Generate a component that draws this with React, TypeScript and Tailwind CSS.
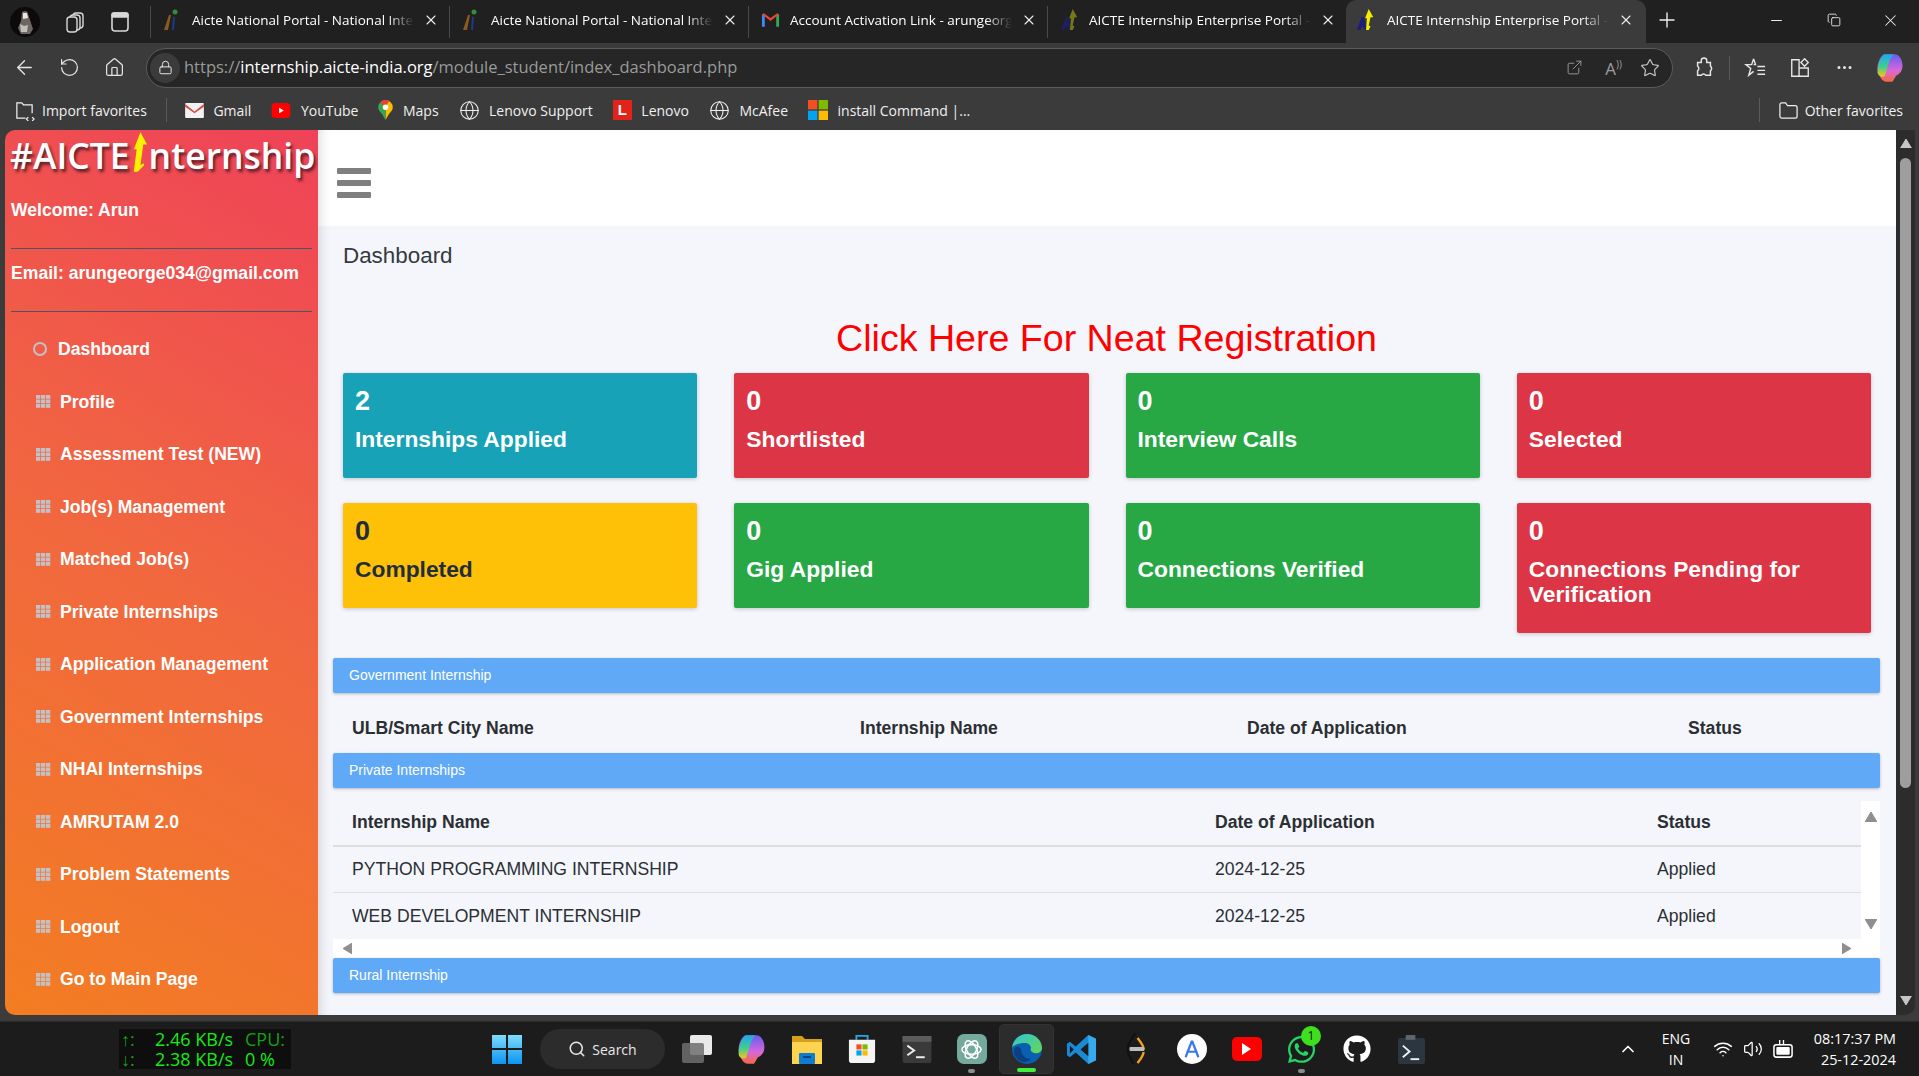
import { ArrowLeft, ChevronUp, Copy, ExternalLink, Globe, Home, Lock, Minus, MoreHorizontal, Plus, RotateCw, Search, Star, Volume2, Wifi, X } from 'lucide-react'
import { FaGithub, FaWhatsapp } from 'react-icons/fa'

// ── Data ─────────────────────────────────────────────────────────────────────
const tabs = [
  { title: 'Aicte National Portal - National Internship', icon: 'aicte' },
  { title: 'Aicte National Portal - National Internship', icon: 'aicte' },
  { title: 'Account Activation Link - arungeorge034', icon: 'gmail' },
  { title: 'AICTE Internship Enterprise Portal - Student', icon: 'ai' },
]

const menu = [
  'Profile',
  'Assessment Test (NEW)',
  'Job(s) Management',
  'Matched Job(s)',
  'Private Internships',
  'Application Management',
  'Government Internships',
  'NHAI Internships',
  'AMRUTAM 2.0',
  'Problem Statements',
  'Logout',
  'Go to Main Page',
]

const cards = [
  { n: '2', label: 'Internships Applied', cls: 'bg-[#17a2b8] text-white' },
  { n: '0', label: 'Shortlisted', cls: 'bg-[#dc3545] text-white' },
  { n: '0', label: 'Interview Calls', cls: 'bg-[#28a745] text-white' },
  { n: '0', label: 'Selected', cls: 'bg-[#dc3545] text-white' },
  { n: '0', label: 'Completed', cls: 'bg-[#ffc107] text-[#1f2d3d]' },
  { n: '0', label: 'Gig Applied', cls: 'bg-[#28a745] text-white' },
  { n: '0', label: 'Connections Verified', cls: 'bg-[#28a745] text-white' },
  { n: '0', label: 'Connections Pending for Verification', cls: 'bg-[#dc3545] text-white' },
]

const applied = [
  { name: 'PYTHON PROGRAMMING INTERNSHIP', date: '2024-12-25', status: 'Applied' },
  { name: 'WEB DEVELOPMENT INTERNSHIP', date: '2024-12-25', status: 'Applied' },
]

// ── Small drawings ───────────────────────────────────────────────────────────
function TabIcon({ kind, dim }: { kind: string; dim?: boolean }) {
  if (kind === 'gmail') {
    return (
      <svg viewBox="0 0 20 16" className="w-[19px] h-[16px] shrink-0">
        <path d="M1 15V2l3 1v12z" fill="#4285f4" />
        <path d="M16 15V3l3-1v13z" fill="#34a853" />
        <path d="M1 2l9 7 9-7-2-1-7 5-7-5z" fill="#ea4335" />
      </svg>
    )
  }
  if (kind === 'aicte') {
    return (
      <svg viewBox="0 0 16 22" className="w-[16px] h-[22px] shrink-0">
        <path d="M1 21L6 6h2L5 21z" fill="#8a5a1f" />
        <path d="M9 21L10 8h2l-1 13z" fill="#1d3a8a" />
        <circle cx="12" cy="3" r="2.5" fill="#2f8f3a" />
      </svg>
    )
  }
  return (
    <svg viewBox="0 0 22 24" className="w-[20px] h-[22px] shrink-0">
      <path d="M1 23L6 9h3l3 14H9.5L9 20H6l-1 3z" fill={dim ? '#1f1f5f' : '#1d1d7a'} />
      <path d="M14 0l5 9h-3l-2 9 2 1-2 4h-3l1-13h-2z" fill={dim ? '#77761a' : '#f5ee00'} />
    </svg>
  )
}

function Avatar() {
  return (
    <svg viewBox="0 0 30 30" className="w-[30px] h-[30px] shrink-0">
      <circle cx="15" cy="15" r="15" fill="#0c0a0a" />
      <path d="M12 5c3-2 6-1 6 2l2 6 3 9-3 5h-9l-3-6 3-7z" fill="#6d6763" />
      <path d="M13 6h4l1 5-5 1z" fill="#ece8e0" />
      <path d="M10 17l4 2 4-1-1 7h-6z" fill="#c4beb8" />
    </svg>
  )
}

function Copilot({ size }: { size: number }) {
  return (
    <svg viewBox="0 0 24 24" width={size} height={size} className="shrink-0">
      <defs>
        <linearGradient id={`cp-a-${size}`} x1="0" y1="0" x2="0" y2="1">
          <stop offset="0" stopColor="#1fa7ee" />
          <stop offset="0.55" stopColor="#3ecf8e" />
          <stop offset="1" stopColor="#f5c518" />
        </linearGradient>
        <linearGradient id={`cp-b-${size}`} x1="0" y1="0" x2="0" y2="1">
          <stop offset="0" stopColor="#6a5cf0" />
          <stop offset="0.6" stopColor="#d868d8" />
          <stop offset="1" stopColor="#f56a3c" />
        </linearGradient>
      </defs>
      <path d="M8 1h8c3 0 6 4 6 9 0 4-2 7-5 8l-3 5H9c-3 0-6-4-6-9-1 0-1-1-1-2 0-5 3-11 6-11z" fill={`url(#cp-b-${size})`} />
      <path d="M8 1h7l-3 4-4 13c-1 2-6 1-6-3 0-5 3-14 6-14z" fill={`url(#cp-a-${size})`} />
    </svg>
  )
}

function TileSquares() {
  return (
    <svg viewBox="0 0 16 16" className="w-[20px] h-[20px] shrink-0">
      <rect x="0" y="0" width="7.5" height="7.5" fill="#f25022" />
      <rect x="8.5" y="0" width="7.5" height="7.5" fill="#7fba00" />
      <rect x="0" y="8.5" width="7.5" height="7.5" fill="#00a4ef" />
      <rect x="8.5" y="8.5" width="7.5" height="7.5" fill="#ffb900" />
    </svg>
  )
}

function GridIcon() {
  return (
    <svg viewBox="0 0 15 13" className="w-[15px] h-[13px] shrink-0" fill="#c3c1c6">
      {[0, 5, 10].map(x =>
        [0, 4.5, 9].map(y => <rect key={`${x}-${y}`} x={x} y={y} width="4.3" height="3.8" />)
      )}
    </svg>
  )
}

function Arrow({ dir, cls }: { dir: 'up' | 'down' | 'left' | 'right'; cls: string }) {
  const points = { up: '0,10 6,0 12,10', down: '0,0 12,0 6,10', left: '10,0 10,12 0,6', right: '0,0 10,6 0,12' }[dir]
  const box = dir === 'up' || dir === 'down' ? '0 0 12 10' : '0 0 10 12'
  return (
    <svg viewBox={box} className={cls}>
      <polygon points={points} fill="currentColor" stroke="currentColor" strokeLinejoin="round" />
    </svg>
  )
}

const chromeFont = "font-['Open_Sans','Noto_Sans',sans-serif]"

// ── Browser chrome ───────────────────────────────────────────────────────────
function TabBar() {
  return (
    <div className={`h-[43px] bg-[#202020] flex items-end text-white ${chromeFont}`}>
      <div className="w-[150px] h-full flex items-center shrink-0 pl-[10px]">
        <Avatar />
        <svg viewBox="0 0 20 22" className="w-[20px] h-[22px] ml-[25px] text-[#d8d8d8]" fill="none" stroke="currentColor" strokeWidth="1.4">
          <rect x="8" y="2" width="10" height="15" rx="3" />
          <rect x="5" y="4" width="10" height="15" rx="3" fill="#202020" />
          <rect x="2" y="6" width="10" height="15" rx="3" fill="#202020" />
        </svg>
        <svg viewBox="0 0 20 22" className="w-[20px] h-[22px] ml-[25px] text-[#d8d8d8]" fill="none" stroke="currentColor" strokeWidth="1.6">
          <rect x="2" y="2" width="16" height="18" rx="3" />
          <rect x="2" y="2" width="16" height="4" rx="1.5" fill="currentColor" />
        </svg>
      </div>
      {tabs.map((t, i) => (
        <div key={i} className="w-[299px] h-full flex items-center shrink-0 pb-[3px]">
          <div className="w-px h-[32px] bg-[#4a4a4a] mt-[3px]" />
          <div className="w-[29px] ml-[12px] flex"><TabIcon kind={t.icon} dim={t.icon === 'ai'} /></div>
          <span className="w-[222px] text-[13.5px] whitespace-nowrap overflow-hidden [mask-image:linear-gradient(90deg,#000_88%,transparent)]">{t.title}</span>
          <X size={16} strokeWidth={1.6} className="ml-[9px] text-[#eee]" />
        </div>
      ))}
      <div className="w-[300px] h-[43px] pb-[3px] mt-auto flex items-center shrink-0 bg-[#3b3b3b] rounded-t-[10px] pl-[10px]">
        <div className="w-[31px] flex"><TabIcon kind="ai" /></div>
        <span className="w-[222px] text-[13.5px] whitespace-nowrap overflow-hidden [mask-image:linear-gradient(90deg,#000_88%,transparent)]">AICTE Internship Enterprise Portal - Student</span>
        <X size={16} strokeWidth={1.6} className="ml-[9px] text-[#eee]" />
      </div>
      <div className="h-full flex items-center flex-1 pb-[3px]">
        <Plus size={24} strokeWidth={1.4} className="ml-[9px] text-[#eee]" />
        <Minus size={17} strokeWidth={1.4} className="ml-[89px] text-[#eee]" />
        <Copy size={14} strokeWidth={1.5} className="ml-[42px] text-[#eee]" />
        <X size={19} strokeWidth={1.3} className="ml-[40px] text-[#eee]" />
      </div>
    </div>
  )
}

function Toolbar() {
  return (
    <div className={`h-[47px] pt-[2px] bg-[#3b3b3b] flex items-center text-[#e6e6e6] ${chromeFont}`}>
      <ArrowLeft size={23} strokeWidth={1.4} className="ml-[13px]" />
      <RotateCw size={21} strokeWidth={1.4} className="ml-[23px] -scale-x-100" />
      <Home size={21} strokeWidth={1.4} className="ml-[24px]" />
      <div className="ml-[21px] w-[1527px] h-[40px] rounded-full bg-[#262626] border border-[#5b5b5b] flex items-center shrink-0">
        <div className="w-[30px] h-[30px] ml-[3px] rounded-full bg-[#3b3b3b] flex items-center justify-center">
          <Lock size={15} strokeWidth={1.6} />
        </div>
        <span className="ml-[4px] text-[16.5px] text-[#9a9a9a] whitespace-nowrap">
          https://<span className="text-white">internship.aicte-india.org</span>/module_student/index_dashboard.php
        </span>
        <div className="ml-auto flex items-center text-[#9d9d9d]">
          <ExternalLink size={17} strokeWidth={1.3} />
          <span className="ml-[22px] text-[17px] leading-none">A<span className="text-[10px] align-super">))</span></span>
          <Star size={20} strokeWidth={1.4} className="ml-[18px] mr-[12px] text-[#c8c8c8]" />
        </div>
      </div>
      <svg viewBox="0 0 24 24" className="w-[22px] h-[22px] ml-[20px] shrink-0" fill="none" stroke="currentColor" strokeWidth="1.6">
        <path d="M9 4a3 3 0 0 1 6 0v2h4v4a3 3 0 0 1 0 5v5h-5a3 3 0 0 0-5 0H5v-5a3 3 0 0 0 0-5V6h4z" />
      </svg>
      <div className="w-px h-[24px] bg-[#5b5b5b] ml-[14px] shrink-0" />
      <svg viewBox="0 0 24 24" className="w-[23px] h-[23px] ml-[14px] shrink-0" fill="none" stroke="currentColor" strokeWidth="1.5">
        <path d="M10 3l2 6h-2M10 3L8 9H2l5 4-2 7 5-4" />
        <path d="M14 11h8M14 15h8M14 19h8" />
      </svg>
      <svg viewBox="0 0 24 24" className="w-[22px] h-[22px] ml-[22px] shrink-0" fill="none" stroke="currentColor" strokeWidth="1.5">
        <path d="M3 3h8v18H3zM11 12h10v9H11zM17 2l4 4-4 4-4-4z" />
      </svg>
      <MoreHorizontal size={19} strokeWidth={1.8} className="ml-[24px] shrink-0" />
      <div className="ml-[21px]"><Copilot size={30} /></div>
    </div>
  )
}

function Favorites() {
  const items: { label: string; icon: React.ReactNode }[] = [
    { label: 'Gmail', icon: <svg viewBox="0 0 20 16" className="w-[19px] h-[15px]"><rect width="20" height="16" rx="1" fill="#f2f2f2" /><path d="M0 1l10 8 10-8v3l-10 7L0 4z" fill="#d54c3f" /></svg> },
    { label: 'YouTube', icon: <svg viewBox="0 0 20 16" className="w-[20px] h-[15px]"><rect width="20" height="16" rx="4" fill="#f00" /><path d="M8 5l5 3-5 3z" fill="#fff" /></svg> },
    { label: 'Maps', icon: <svg viewBox="0 0 16 22" className="w-[15px] h-[20px]"><path d="M8 0a8 8 0 0 1 8 8c0 3-2 5-4 7l-4 7z" fill="#fbbc04" /><path d="M8 0a8 8 0 0 0-8 8c0 3 2 5 4 7l4 7z" fill="#34a853" /><path d="M2 3a8 8 0 0 1 10-2L8 8z" fill="#ea4335" /><circle cx="8" cy="8" r="3" fill="#fff" /></svg> },
    { label: 'Lenovo Support', icon: <Globe size={21} strokeWidth={1.2} /> },
    { label: 'Lenovo', icon: <span className="w-[19px] h-[20px] bg-[#e2231a] text-white flex items-center justify-center text-[15px] font-bold font-['Liberation_Sans']">L</span> },
    { label: 'McAfee', icon: <Globe size={21} strokeWidth={1.2} /> },
    { label: 'install Command |...', icon: <TileSquares /> },
  ]
  return (
    <div className={`h-[40px] bg-[#3b3b3b] flex items-center text-[#f0f0f0] text-[14px] ${chromeFont}`}>
      <svg viewBox="0 0 22 22" className="w-[21px] h-[21px] ml-[14px]" fill="none" stroke="currentColor" strokeWidth="1.3">
        <path d="M12 19H3V3h5l2 2h9v9M15 18l-2 2 2 2M19 18l2 2-2 2" />
      </svg>
      <span className="ml-[7px]">Import favorites</span>
      <div className="w-px h-[24px] bg-[#5b5b5b] ml-[19px]" />
      <div className="flex items-center gap-[20px] ml-[18px]">
        {items.map(f => (
          <div key={f.label} className="flex items-center gap-[9.5px] whitespace-nowrap">
            {f.icon}
            <span>{f.label}</span>
          </div>
        ))}
      </div>
      <div className="ml-auto flex items-center mr-[16px]">
        <div className="w-px h-[24px] bg-[#5b5b5b] mr-[18px]" />
        <svg viewBox="0 0 22 22" className="w-[21px] h-[21px]" fill="none" stroke="currentColor" strokeWidth="1.3">
          <path d="M2 5a2 2 0 0 1 2-2h4l2 3h8a2 2 0 0 1 2 2v9a2 2 0 0 1-2 2H4a2 2 0 0 1-2-2z" />
        </svg>
        <span className="ml-[6px]">Other favorites</span>
      </div>
    </div>
  )
}

// ── Page parts ───────────────────────────────────────────────────────────────
function Sidebar() {
  return (
    <aside className="w-[313px] ml-[5px] shrink-0 rounded-tl-[10px] rounded-bl-[10px] overflow-hidden bg-[linear-gradient(30deg,#f37d22_0%,#f1673f_50%,#ef4259_100%)] text-white font-['Liberation_Sans',sans-serif] font-bold text-[17.6px]">
      <div className="h-[52px] mb-[4px] pl-[5px] relative flex items-center text-[35.5px] font-semibold whitespace-nowrap font-['Open_Sans',sans-serif] [text-shadow:2px_3px_3px_rgba(60,20,30,0.8)]">
        <span>#AICTE</span>
        <svg viewBox="0 0 18 42" className="w-[17px] h-[40px] -mt-[8px] mx-[1px] shrink-0">
          <path d="M10 0l7 13h-4l-3 22 3-2 1 2-7 7H3l3-24H3z" fill="#f7f300" />
        </svg>
        <span>nternship</span>
      </div>
      <div className="h-[62px] pl-[6px] pt-[14px] leading-[20px]">Welcome: Arun</div>
      <div className="h-px mx-[6px] bg-[#4b5563]" />
      <div className="h-[62px] pl-[6px] pt-[14px] leading-[20px]">Email: arungeorge034@gmail.com</div>
      <div className="h-px mx-[6px] bg-[#4b5563]" />
      <nav className="pt-[11px]">
        <div className="h-[52.5px] flex items-center">
          <span className="ml-[28px] w-[14px] h-[14px] rounded-full border-2 border-[#c3c1c6]" />
          <span className="ml-[11px]">Dashboard</span>
        </div>
        {menu.map(m => (
          <div key={m} className="h-[52.5px] flex items-center">
            <div className="ml-[31px]"><GridIcon /></div>
            <span className="ml-[9px] whitespace-nowrap">{m}</span>
          </div>
        ))}
      </nav>
    </aside>
  )
}

function InfoBar({ title }: { title: string }) {
  return (
    <div className="h-[35px] pl-[16px] flex items-center rounded-[2px] bg-[#5fa9f7] text-white text-[14px] shadow-[0_1px_3px_rgba(0,0,0,0.25)]">
      {title}
    </div>
  )
}

function Dashboard() {
  return (
    <main className="flex-1 min-w-0 bg-[#f4f6fb] shadow-[inset_12px_0_12px_-10px_rgba(0,0,0,0.15)] font-['Liberation_Sans',sans-serif] text-[#2b2f33] text-[17.6px] overflow-hidden">
      <div className="h-[96px] bg-white flex items-center pl-[19px] shadow-[inset_12px_0_12px_-10px_rgba(0,0,0,0.15)]">
        <div className="w-[34px] flex flex-col gap-[6.5px] mt-[10px]">
          <span className="h-[5.5px] bg-[#7f7f7f] rounded-[1px]" />
          <span className="h-[5.5px] bg-[#7f7f7f] rounded-[1px]" />
          <span className="h-[5.5px] bg-[#7f7f7f] rounded-[1px]" />
        </div>
      </div>
      <h1 className="pl-[25px] pt-[16px] text-[22.4px] leading-[28px] text-[#343a40]">Dashboard</h1>
      <div className="mt-[44px] mb-[11px] h-[48px] pr-[1px] flex items-center justify-center text-[37.6px] text-[#f00]">
        Click Here For Neat Registration
      </div>
      <div className="px-[25px] grid grid-cols-4 gap-x-[37px] gap-y-[25px] items-start">
        {cards.map(c => (
          <div key={c.label} className={`${c.cls} rounded-[2px] px-[12px] pt-[12px] pb-[26px] shadow-[0_1px_4px_rgba(0,0,0,0.2)]`}>
            <div className="text-[27px] leading-[32px] font-bold">{c.n}</div>
            <div className="mt-[10px] text-[22.8px] leading-[25px] font-bold">{c.label}</div>
          </div>
        ))}
      </div>
      <div className="pl-[15px] pr-[16px] mt-[25px]">
        <InfoBar title="Government Internship" />
        <div className="h-[60px] pl-[19px] pt-[25px] leading-[20px] font-bold grid grid-cols-[508px_387px_441px_1fr]">
          <span>ULB/Smart City Name</span>
          <span>Internship Name</span>
          <span>Date of Application</span>
          <span>Status</span>
        </div>
        <InfoBar title="Private Internships" />
        <div className="mt-[13px] h-[157px] flex flex-col bg-white">
          <div className="flex h-[138px]">
            <div className="flex-1 bg-[#f4f6fb]">
              <div className="h-[46px] pl-[19px] pt-[11px] leading-[20px] font-bold grid grid-cols-[863px_442px_1fr] border-b-2 border-[#dedede]">
                <span>Internship Name</span>
                <span>Date of Application</span>
                <span>Status</span>
              </div>
              {applied.map((r, i) => (
                <div key={r.name} className={`h-[46px] pl-[19px] flex items-center ${i === 0 ? 'border-b border-[#dedede]' : ''}`}>
                  <div className="w-full grid grid-cols-[863px_442px_1fr]">
                    <span>{r.name}</span>
                    <span>{r.date}</span>
                    <span>{r.status}</span>
                  </div>
                </div>
              ))}
            </div>
            <div className="w-[19px] flex flex-col items-center justify-between pt-[11px] pb-[10px] text-[#8f8f8f]">
              <Arrow dir="up" cls="w-[12px] h-[10px]" />
              <Arrow dir="down" cls="w-[12px] h-[10px]" />
            </div>
          </div>
          <div className="h-[19px] flex items-center justify-between pl-[10px] pr-[29px] text-[#8f8f8f]">
            <Arrow dir="left" cls="w-[9px] h-[11px]" />
            <Arrow dir="right" cls="w-[9px] h-[11px]" />
          </div>
        </div>
        <InfoBar title="Rural Internship" />
      </div>
    </main>
  )
}

function PageScrollbar() {
  return (
    <div className="w-[19px] shrink-0 bg-[#2c2c2c] rounded-br-[10px] flex flex-col items-center text-[#c6c6c6]">
      <Arrow dir="up" cls="w-[12px] h-[9px] mt-[9px]" />
      <div className="w-[11px] h-[630px] mt-[10px] rounded-full bg-[#9e9e9e]" />
      <Arrow dir="down" cls="w-[12px] h-[9px] mt-auto mb-[10px]" />
    </div>
  )
}

// ── Taskbar ──────────────────────────────────────────────────────────────────
function AppSlot({ children, dot, active }: { children: React.ReactNode; dot?: boolean; active?: boolean }) {
  return (
    <div className={`relative w-[55px] h-[50px] flex items-center justify-center rounded-[5px] ${active ? 'bg-[#2c2c2c] border border-[#333]' : ''}`}>
      {children}
      {dot && <span className="absolute bottom-[1px] w-[7px] h-[4px] rounded-full bg-[#8b8b8b]" />}
      {active && <span className="absolute bottom-[1px] w-[19px] h-[4px] rounded-full bg-[#3ff03f]" />}
    </div>
  )
}

function Taskbar() {
  return (
    <div className={`h-[55px] bg-[#1c1c1c] border-t border-[#2a2a2a] flex items-center text-white relative ${chromeFont}`}>
      <div className="ml-[119px] w-[172px] h-[40px] bg-[#0e0e0e] text-[#19e819] text-[18px] leading-[20px] grid grid-cols-[36px_90px_1fr] whitespace-nowrap overflow-hidden">
        <span className="text-[#15a015] pl-[2px]">↑:</span><span>2.46 KB/s</span><span className="text-[#15a015]">CPU:</span>
        <span className="text-[#15a015] pl-[2px]">↓:</span><span>2.38 KB/s</span><span>0 %</span>
      </div>
      <svg viewBox="0 0 30 30" className="w-[30px] h-[30px] ml-[201px] shrink-0">
        <defs>
          <linearGradient id="win" x1="0" y1="0" x2="0" y2="1">
            <stop offset="0" stopColor="#7fdcfb" />
            <stop offset="1" stopColor="#0c94f2" />
          </linearGradient>
        </defs>
        <path d="M0 1h14v13H0zM16 1h14v13H16zM0 16h14v14H0zM16 16h14v14H16z" fill="url(#win)" />
      </svg>
      <div className="ml-[18px] w-[125px] h-[40px] rounded-full bg-[#2c2c2c] flex items-center justify-center gap-[6px] text-[14px] text-[#e8e8e8]">
        <Search size={18} strokeWidth={2} />
        <span>Search</span>
      </div>
      <div className="ml-[4px] flex items-center">
        <AppSlot>
          <div className="relative w-[30px] h-[28px]">
            <span className="absolute right-0 top-0 w-[22px] h-[20px] rounded-[2px] bg-[#e9e9e9]" />
            <span className="absolute left-0 bottom-0 w-[22px] h-[20px] rounded-[2px] bg-[#6e6e6e]/85" />
          </div>
        </AppSlot>
        <AppSlot><Copilot size={31} /></AppSlot>
        <AppSlot>
          <svg viewBox="0 0 30 30" className="w-[30px] h-[30px]">
            <path d="M0 2h10l3 3h17v25H0z" fill="#d6a01b" />
            <path d="M0 8h30v22H0z" fill="#fdd44f" />
            <rect x="7" y="19" width="16" height="11" rx="1" fill="#0f7cd0" />
            <rect x="11" y="22" width="8" height="2" fill="#06487d" />
          </svg>
        </AppSlot>
        <AppSlot>
          <svg viewBox="0 0 30 32" className="w-[28px] h-[30px]">
            <path d="M9 6V2h12v4" fill="none" stroke="#22a7ea" strokeWidth="2" />
            <path d="M1 6h28v22a3 3 0 0 1-3 3H4a3 3 0 0 1-3-3z" fill="#f4f4f4" />
            <rect x="9" y="11" width="5.5" height="5.5" fill="#f25022" />
            <rect x="15.5" y="11" width="5.5" height="5.5" fill="#7fba00" />
            <rect x="9" y="17.5" width="5.5" height="5.5" fill="#00a4ef" />
            <rect x="15.5" y="17.5" width="5.5" height="5.5" fill="#ffb900" />
          </svg>
        </AppSlot>
        <AppSlot>
          <svg viewBox="0 0 30 28" className="w-[30px] h-[27px]">
            <rect width="30" height="28" rx="2" fill="#3a3a3a" />
            <rect width="30" height="6" fill="#5c5c5c" />
            <path d="M5 10l7 5-7 5" fill="none" stroke="#eee" strokeWidth="2" />
            <path d="M14 22h9" stroke="#eee" strokeWidth="2" />
          </svg>
        </AppSlot>
        <AppSlot dot>
          <div className="w-[30px] h-[30px] rounded-[7px] bg-[#74aa9c] flex items-center justify-center">
            <svg viewBox="0 0 24 24" className="w-[23px] h-[23px]" fill="none" stroke="#fff" strokeWidth="1.6">
              <ellipse cx="12" cy="12" rx="10" ry="5" />
              <ellipse cx="12" cy="12" rx="10" ry="5" transform="rotate(60 12 12)" />
              <ellipse cx="12" cy="12" rx="10" ry="5" transform="rotate(120 12 12)" />
            </svg>
          </div>
        </AppSlot>
        <AppSlot active>
          <svg viewBox="0 0 32 32" className="w-[32px] h-[32px]">
            <defs>
              <linearGradient id="edge" x1="0" y1="0" x2="1" y2="1">
                <stop offset="0" stopColor="#2fc3d8" />
                <stop offset="1" stopColor="#67d94e" />
              </linearGradient>
            </defs>
            <circle cx="16" cy="16" r="15" fill="#0b5fb0" />
            <path d="M1 15C2 6 9 1 16 1c9 0 15 7 15 14 0 4-4 6-8 5-3-1-4-3-3-5 0-3-3-5-6-5-6 0-12 2-13 5z" fill="url(#edge)" />
            <path d="M10 16c0 6 4 10 10 10-3 3-8 4-11 2-5-3-7-8-6-12 2-3 5-3 7 0z" fill="#0a3f82" />
          </svg>
        </AppSlot>
        <AppSlot>
          <svg viewBox="0 0 32 32" className="w-[31px] h-[31px]">
            <path d="M23 1l8 4v22l-8 4L10 19l-6 5-3-2v-12l3-2 6 5z" fill="#1a8ad4" />
            <path d="M23 1l8 4v22l-8 4z" fill="#38a9ec" />
            <path d="M23 9l-8 7 8 7z" fill="#1c1c1c" />
            <path d="M4 12v8l4-4z" fill="#1c1c1c" />
          </svg>
        </AppSlot>
        <AppSlot>
          <svg viewBox="0 0 24 34" className="w-[25px] h-[34px]" fill="none">
            <path d="M11 1C5 9 3 13 3 17s2 8 6 15" stroke="#111" strokeWidth="2.2" />
            <path d="M13 6c3 4 6 7 6 11" stroke="#f29f1c" strokeWidth="2.4" />
            <path d="M19 20c0 4-3 7-6 11" stroke="#f29f1c" strokeWidth="2.4" />
            <rect x="5" y="15" width="15" height="4" rx="1" fill="#bdbdbd" />
          </svg>
        </AppSlot>
        <AppSlot>
          <div className="w-[30px] h-[30px] rounded-full bg-white flex items-center justify-center">
            <svg viewBox="0 0 24 24" className="w-[22px] h-[22px]" fill="none" stroke="#3b78e7" strokeWidth="2.4">
              <path d="M12 3L5 21M12 3l7 18M6 15h12" />
            </svg>
          </div>
        </AppSlot>
        <AppSlot>
          <div className="w-[30px] h-[24px] rounded-[5px] bg-[#f00] flex items-center justify-center">
            <span className="w-0 h-0 border-y-[6px] border-y-transparent border-l-[9px] border-l-white" />
          </div>
        </AppSlot>
        <AppSlot dot>
          <FaWhatsapp size={31} color="#25d366" />
          <span className="absolute top-[2px] right-[8px] w-[20px] h-[20px] rounded-full bg-[#3ee01d] text-[#111] text-[12px] flex items-center justify-center">1</span>
        </AppSlot>
        <AppSlot>
          <FaGithub size={28} color="#fff" />
        </AppSlot>
        <AppSlot>
          <svg viewBox="0 0 28 30" className="w-[27px] h-[29px]">
            <rect y="3" width="28" height="27" rx="2" fill="#2b3640" />
            <rect x="8" y="0" width="10" height="5" fill="#5d666e" />
            <path d="M5 11l7 6-7 6" fill="none" stroke="#eee" strokeWidth="2" />
            <path d="M13 25h9" stroke="#eee" strokeWidth="2" />
          </svg>
        </AppSlot>
      </div>
      <ChevronUp size={20} strokeWidth={2} className="absolute left-[1618px]" />
      <div className="absolute left-[1656px] w-[40px] text-center text-[14px] leading-[21px]">
        <div>ENG</div>
        <div>IN</div>
      </div>
      <Wifi size={20} strokeWidth={1.8} className="absolute left-[1713px]" />
      <Volume2 size={20} strokeWidth={1.5} className="absolute left-[1743px]" />
      <svg viewBox="0 0 24 22" className="absolute left-[1772px] w-[23px] h-[21px]" fill="none" stroke="#fff" strokeWidth="1.6">
        <rect x="2" y="6" width="19" height="13" rx="2.5" />
        <rect x="4.5" y="8.5" width="14" height="8" rx="1" fill="#fff" stroke="none" />
        <path d="M8 1v5M12 1v5" strokeWidth="1.4" />
      </svg>
      <div className="absolute left-[1802px] w-[94px] text-right text-[14.4px] leading-[21px] whitespace-nowrap">
        <div>08:17:37 PM</div>
        <div>25-12-2024</div>
      </div>
    </div>
  )
}

// ── Page ──────────────────────────────────────────────────────────────────────
export default function App() {
  return (
    <div className="w-[1919px] h-[1076px] overflow-hidden bg-[#3b3b3b] flex flex-col">
      <TabBar />
      <Toolbar />
      <Favorites />
      <div className="h-[885px] flex pr-[4px]">
        <Sidebar />
        <Dashboard />
        <PageScrollbar />
      </div>
      <div className="h-[6px]" />
      <Taskbar />
    </div>
  )
}
